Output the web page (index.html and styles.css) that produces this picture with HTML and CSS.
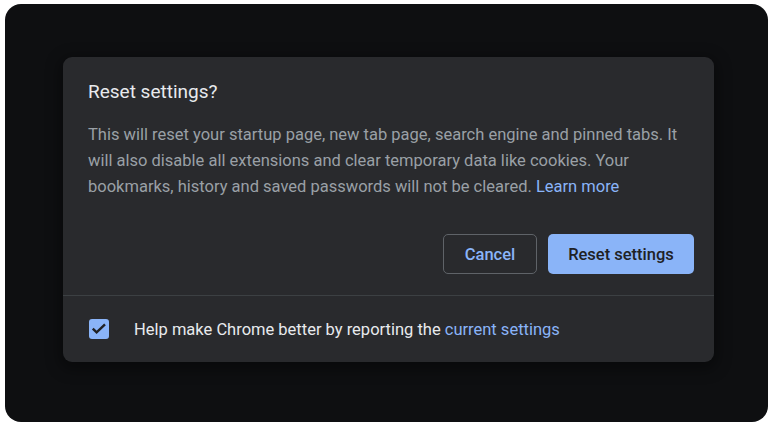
FILE: index.html
```html
<!DOCTYPE html>
<html>
<head>
<meta charset="utf-8">
<link rel="stylesheet" href="styles.css">
</head>
<body>
<div class="frame">
  <div class="dialog">
    <div class="main">
      <h1 class="title">Reset settings?</h1>
      <p class="body">This will reset your startup page, new tab page, search engine and pinned tabs. It will also disable all extensions and clear temporary data like cookies. Your bookmarks, history and saved passwords will not be cleared. <a class="link">Learn more</a></p>
      <div class="actions">
        <button class="btn cancel">Cancel</button>
        <button class="btn primary">Reset settings</button>
      </div>
    </div>
    <div class="footer">
      <span class="check">
        <svg width="20" height="20" viewBox="0 0 20 20"><path d="M3.8 9.6 L7.6 13.3 L16 5.4" fill="none" stroke="#202124" stroke-width="2.4"/></svg>
      </span>
      <span class="footer-text">Help make Chrome better by reporting the <a class="link">current settings</a></span>
    </div>
  </div>
</div>
</body>
</html>
```
FILE: styles.css
```css
html, body {
  margin: 0;
  padding: 0;
  background: #ffffff;
}
body {
  width: 773px;
  height: 425px;
  font-family: Roboto, "Liberation Sans", sans-serif;
}
.frame {
  margin: 4px 5px 0 5px;
  height: 418px;
  box-sizing: border-box;
  border-radius: 16px;
  background: #0e0f11;
  padding: 53px 0 0 58px;
}
.dialog {
  width: 651px;
  height: 305px;
  background: #292a2d;
  border-radius: 9px;
  box-shadow: 0 4px 14px 4px rgba(0,0,0,0.35);
  display: flex;
  flex-direction: column;
}
.main {
  padding: 23px 20px 0 25px;
  height: 239px;
  box-sizing: border-box;
  border-bottom: 1px solid #3c4043;
}
.title {
  margin: 0;
  font-size: 19px;
  font-weight: 400;
  color: #e8eaed;
  line-height: 24px;
}
.body {
  margin: 18px 0 0 0;
  font-size: 16.5px;
  line-height: 26px;
  color: #9aa0a6;
  width: 600px;
}
.link {
  color: #8ab4f8;
}
.actions {
  display: flex;
  justify-content: flex-end;
  gap: 11px;
  margin-top: 34px;
}
.btn {
  height: 40px;
  border-radius: 5px;
  font-family: Roboto, "Liberation Sans", sans-serif;
  font-size: 16.5px;
  font-weight: 500;
  padding: 0;
  box-sizing: border-box;
}
.cancel {
  width: 94px;
  background: transparent;
  border: 1px solid #5f6368;
  color: #8ab4f8;
}
.primary {
  width: 146px;
  background: #8ab4f8;
  border: none;
  color: #202124;
}
.footer {
  flex: 1;
  display: flex;
  align-items: center;
  padding: 0 0 0 26px;
}
.check {
  width: 20px;
  height: 20px;
  border-radius: 3px;
  background: #8ab4f8;
  display: flex;
}
.footer-text {
  margin-left: 25px;
  font-size: 16.5px;
  color: #e8eaed;
}
```
